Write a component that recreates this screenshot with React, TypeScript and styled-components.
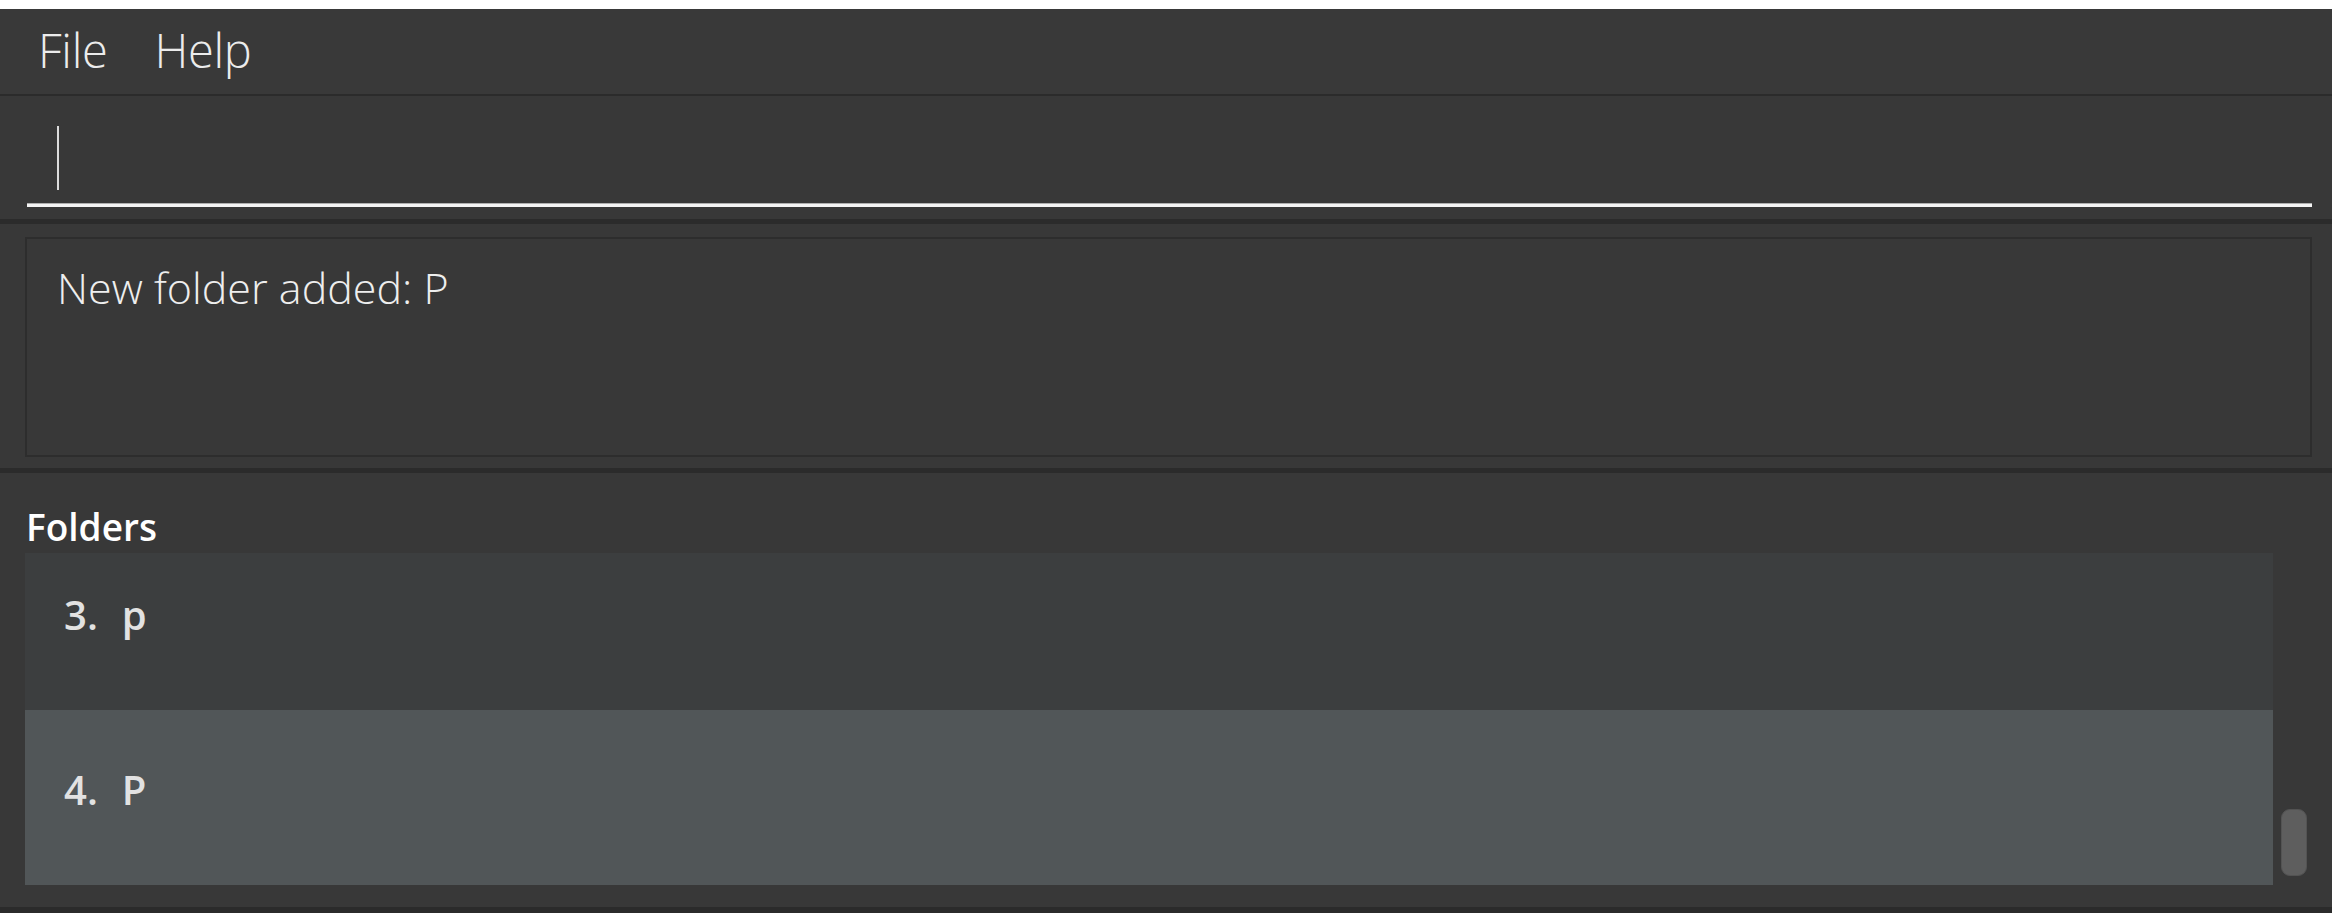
import React, { useLayoutEffect, useRef } from "react";
import styled, { createGlobalStyle } from "styled-components";

const GlobalStyle = createGlobalStyle`
  html, body {
    margin: 0;
    padding: 0;
    background: #ffffff;
  }
  body {
    padding-top: 9px;
    font-family: "Open Sans", "Noto Sans", sans-serif;
  }
  * { box-sizing: border-box; }
`;

const Window = styled.div`
  width: 2332px;
  height: 904px;
  display: flex;
  flex-direction: column;
  background: #383838;
  overflow: hidden;
`;

const MenuBar = styled.div`
  height: 85px;
  flex: none;
  display: flex;
  align-items: center;
  gap: 47px;
  padding: 0 0 3px 38px;
  background: #393939;
`;

const MenuItem = styled.span`
  font-family: "Open Sans", sans-serif;
  font-weight: 300;
  font-size: 47px;
  letter-spacing: -0.3px;
  color: #ececec;
  line-height: normal;
`;

const Divider = styled.div<{ $h: number }>`
  flex: none;
  height: ${(p) => p.$h}px;
  background: #2b2b2b;
`;

const CommandSection = styled.div`
  flex: none;
  height: 123px;
  padding: 14px 20px 12px 27px;
`;

const CommandInput = styled.div`
  height: 97px;
  padding: 16px 0 0 30px;
  border-bottom: 3px solid #f4f4f4;
  position: relative;
  &::after {
    content: "";
    position: absolute;
    left: 0;
    right: 0;
    bottom: 0;
    height: 1px;
    background: #b0b0b0;
  }
`;

const Caret = styled.div`
  width: 2px;
  height: 64px;
  background: #dcdcdc;
`;

const ResultSection = styled.div`
  flex: none;
  height: 244px;
  padding: 13px 20px 11px 25px;
`;

const ResultBox = styled.div`
  height: 100%;
  border: 2px solid #2d2d2d;
  padding: 19px 30px;
`;

const ResultText = styled.div`
  font-family: "Open Sans", sans-serif;
  font-weight: 300;
  font-size: 43px;
  line-height: normal;
  color: #eeeeee;
`;

const FolderSection = styled.div`
  flex: 1;
  min-height: 0;
  display: flex;
  flex-direction: column;
  padding: 28px 17px 22px 25px;
`;

const SectionLabel = styled.div`
  font-family: "Open Sans", sans-serif;
  font-weight: 600;
  font-size: 37px;
  line-height: normal;
  color: #ffffff;
  padding-left: 1px;
  margin-bottom: 1px;
`;

const ListFrame = styled.div`
  flex: 1;
  min-height: 0;
  display: flex;
  position: relative;
`;

const ListViewport = styled.div`
  flex: 1;
  overflow: hidden;
`;

const Row = styled.div<{ $odd: boolean }>`
  height: 175px;
  display: flex;
  align-items: flex-start;
  gap: 24px;
  padding: 52px 0 0 39px;
  background: ${(p) => (p.$odd ? "#515658" : "#3c3e3f")};
  font-family: "Open Sans", sans-serif;
  font-weight: 600;
  font-size: 40px;
  line-height: normal;
  color: #e2e2e2;
`;

const ScrollTrack = styled.div`
  width: 42px;
  flex: none;
  display: flex;
  flex-direction: column;
  justify-content: flex-end;
  align-items: center;
  padding-bottom: 9px;
`;

const ScrollThumb = styled.div`
  width: 26px;
  height: 67px;
  border-radius: 9px;
  background: #5e5e5e;
  border: 1px solid #535353;
`;

const folders = [
  { index: 3, name: "p" },
  { index: 4, name: "P" },
];

export default function App() {
  const viewport = useRef<HTMLDivElement>(null);
  useLayoutEffect(() => {
    if (viewport.current) viewport.current.scrollTop = viewport.current.scrollHeight;
  }, []);

  return (
    <>
      <GlobalStyle />
      <Window>
        <MenuBar>
          <MenuItem>File</MenuItem>
          <MenuItem>Help</MenuItem>
        </MenuBar>
        <Divider $h={2} />
        <CommandSection>
          <CommandInput>
            <Caret />
          </CommandInput>
        </CommandSection>
        <Divider $h={5} />
        <ResultSection>
          <ResultBox>
            <ResultText>New folder added: P</ResultText>
          </ResultBox>
        </ResultSection>
        <Divider $h={5} />
        <FolderSection>
          <SectionLabel>Folders</SectionLabel>
          <ListFrame>
            <ListViewport ref={viewport}>
              {folders.map((f, i) => (
                <Row key={f.index} $odd={i % 2 === 1}>
                  <span>{f.index}.</span>
                  <span>{f.name}</span>
                </Row>
              ))}
            </ListViewport>
            <ScrollTrack>
              <ScrollThumb />
            </ScrollTrack>
          </ListFrame>
        </FolderSection>
        <Divider $h={6} />
      </Window>
    </>
  );
}
